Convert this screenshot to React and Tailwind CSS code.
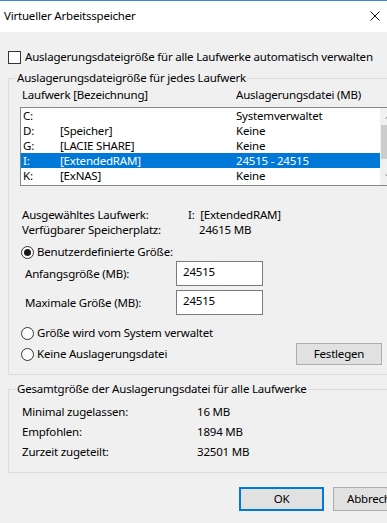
import React from 'react';

const rows = [
  { drive: 'C:', label: '', size: 'Systemverwaltet' },
  { drive: 'D:', label: '[Speicher]', size: 'Keine' },
  { drive: 'G:', label: '[LACIE SHARE]', size: 'Keine' },
  { drive: 'I:', label: '[ExtendedRAM]', size: '24515 - 24515', selected: true },
  { drive: 'K:', label: '[ExNAS]', size: 'Keine' },
];

const Radio = ({ checked }) => (
  <span className="w-[13px] h-[13px] rounded-full border border-[#333] bg-white flex items-center justify-center shrink-0">
    {checked && <span className="w-[7px] h-[7px] rounded-full bg-[#1a1a1a]" />}
  </span>
);

const Button = ({ children, primary }) => (
  <button
    className={`w-[85px] h-[24px] shrink-0 bg-[#e1e1e1] flex items-center justify-center ${
      primary ? 'border-2 border-[#0078d7]' : 'border border-[#adadad]'
    }`}
  >
    {children}
  </button>
);

export default function App() {
  return (
    <div className="w-[387px] h-[523px] overflow-hidden bg-[#f0f0f0] text-[11.5px] tracking-[-0.2px] leading-[16px] text-black font-['Noto_Sans',sans-serif]">
      {/* title bar */}
      <div className="h-[32px] bg-white border-t border-[#3c8ad8] flex items-center justify-between pl-[4px] pr-[7px]">
        <span className="-mt-[2px]">Virtueller Arbeitsspeicher</span>
        <svg width="10" height="10" viewBox="0 0 10 10" className="-mt-[2px]">
          <path d="M0.5 0.5L9.5 9.5M9.5 0.5L0.5 9.5" stroke="#111" strokeWidth="1" />
        </svg>
      </div>

      <div className="mt-[17px] h-[16px] flex items-center pl-[8px] gap-[4px] whitespace-nowrap">
        <span className="w-[13px] h-[13px] border border-[#333] bg-white shrink-0" />
        <span>Auslagerungsdateigröße für alle Laufwerke automatisch verwalten</span>
      </div>

      {/* per-drive group */}
      <fieldset className="mt-[5px] ml-[8px] w-[400px] border border-[#dcdcdc] pb-[9px]">
        <legend className="ml-[7px] px-[1px] leading-[16px]">Auslagerungsdateigröße für jedes Laufwerk</legend>

        <div className="mt-[1px] h-[16px] flex pl-[13px]">
          <span className="w-[214px]">Laufwerk [Bezeichnung]</span>
          <span>Auslagerungsdatei (MB)</span>
        </div>

        <div className="mt-[4px] ml-[11px] w-[378px] h-[79px] border border-[#828790] bg-white flex">
          <div className="w-[359px]">
            {rows.map((r) => (
              <div
                key={r.drive}
                className={`h-[15px] leading-[15px] flex items-center pl-[2px] ${r.selected ? 'bg-[#0078d7] text-white' : ''}`}
              >
                <span className="w-[37px]">{r.drive}</span>
                <span className="w-[176px]">{r.label}</span>
                <span>{r.size}</span>
              </div>
            ))}
          </div>
          <div className="w-[17px] bg-[#f0f0f0] flex flex-col items-center">
            <svg width="9" height="6" viewBox="0 0 9 6" className="mt-[6px]">
              <path d="M1 5L4.5 1.5L8 5" stroke="#a0a0a0" fill="none" />
            </svg>
            <div className="mt-[5px] w-[15px] h-[34px] bg-[#cdcdcd]" />
            <svg width="9" height="6" viewBox="0 0 9 6" className="mt-[14px]">
              <path d="M1 1L4.5 4.5L8 1" stroke="#a0a0a0" fill="none" />
            </svg>
          </div>
        </div>

        <div className="mt-[21px] pl-[13px] leading-[15px]">
          <div className="h-[15px] flex items-center">
            <span className="w-[166px]">Ausgewähltes Laufwerk:</span>
            <span>I:&nbsp;&nbsp;[ExtendedRAM]</span>
          </div>
          <div className="h-[15px] flex items-center">
            <span className="w-[177px]">Verfügbarer Speicherplatz:</span>
            <span>24615 MB</span>
          </div>
        </div>

        <div className="mt-[7px] h-[16px] flex items-center pl-[12px] gap-[3px]">
          <Radio checked />
          <span>Benutzerdefinierte Größe:</span>
        </div>

        <div className="mt-[1px] h-[25px] flex items-center pl-[16px]">
          <span className="w-[151px]">Anfangsgröße (MB):</span>
          <div className="w-[87px] h-[25px] bg-white border border-[#7a7a7a] pl-[6px] pt-[2px]">24515</div>
        </div>
        <div className="mt-[4px] h-[25px] flex items-center pl-[16px]">
          <span className="w-[151px]">Maximale Größe (MB):</span>
          <div className="w-[87px] h-[25px] bg-white border border-[#7a7a7a] pl-[6px] pt-[2px]">24515</div>
        </div>

        <div className="mt-[10px] h-[16px] flex items-center pl-[12px] gap-[3px]">
          <Radio />
          <span>Größe wird vom System verwaltet</span>
        </div>
        <div className="mt-[2px] h-[22px] flex items-center pl-[12px]">
          <div className="flex items-center gap-[3px] w-[275px]">
            <Radio />
            <span>Keine Auslagerungsdatei</span>
          </div>
          <button className="w-[86px] h-[22px] bg-[#e1e1e1] border border-[#adadad] flex items-center justify-center">
            Festlegen
          </button>
        </div>
      </fieldset>

      {/* totals group */}
      <fieldset className="mt-[6px] ml-[8px] w-[400px] border border-[#dcdcdc] pb-[10px]">
        <legend className="ml-[7px] px-[1px] leading-[16px]">Gesamtgröße der Auslagerungsdatei für alle Laufwerke</legend>
        <div className="mt-[5px] pl-[13px]">
          {[
            ['Minimal zugelassen:', '16 MB'],
            ['Empfohlen:', '1894 MB'],
            ['Zurzeit zugeteilt:', '32501 MB'],
          ].map(([k, v]) => (
            <div key={k} className="h-[20px] flex items-center">
              <span className="w-[175px]">{k}</span>
              <span>{v}</span>
            </div>
          ))}
        </div>
      </fieldset>

      <div className="mt-[14px] w-[500px] flex gap-[9px] pl-[239px] whitespace-nowrap">
        <Button primary>OK</Button>
        <Button>Abbrechen</Button>
      </div>
    </div>
  );
}
